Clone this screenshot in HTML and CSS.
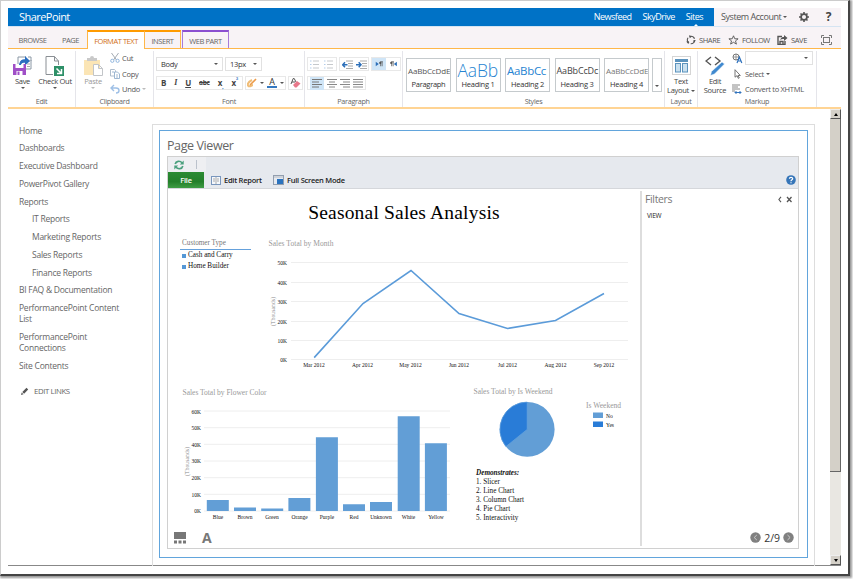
FILE: index.html
```html
<!DOCTYPE html>
<html lang="en">
<head>
<meta charset="utf-8">
<title>SharePoint - Page Viewer</title>
<link rel="stylesheet" href="styles.css">
</head>
<body>
<div class="window">
<header class="suite">
  <div class="suite-blue"><span class="brand">SharePoint</span><nav class="suite-links"><a>Newsfeed</a><a>SkyDrive</a><a class="current">Sites</a></nav></div>
  <div class="suite-user"><span class="account">System Account</span><i class="caret"></i>
    <svg class="gear" width="10" height="10" viewBox="0 0 10 10"><circle cx="5" cy="5" r="2.9" fill="none" stroke="#555" stroke-width="1.7"/><path d="M5 0v2M5 8v2M0 5h2M8 5h2M1.5 1.5l1.3 1.3M7.2 7.2l1.3 1.3M8.5 1.5L7.2 2.8M2.8 7.2L1.5 8.5" stroke="#555" stroke-width="1.6"/></svg>
    <b class="help">?</b></div>
</header>
<div class="tabs">
  <span class="tab browse">BROWSE</span><span class="tab page">PAGE</span><span class="tab format">FORMAT TEXT</span><span class="tab insert">INSERT</span><span class="tab webpart">WEB PART</span>
  <div class="actions">
    <svg width="10" height="10" viewBox="0 0 10 10"><circle cx="5" cy="5" r="3.7" fill="none" stroke="#555" stroke-width="1.1" stroke-dasharray="6 1.7"/><path d="M3.2 0l2.6 1.4-2 1.8zM9.8 5.2L7.9 8 7 5.4zM.2 6.6l2.9-.3-.8 2.6z" fill="#555"/></svg><span class="a-share">SHARE</span>
    <svg width="11" height="10" viewBox="0 0 11 10"><path d="M5.5.8l1.3 3h3.3L7.5 5.9l.9 3.2-2.9-1.8-2.9 1.8.9-3.2L.9 3.8h3.3z" fill="none" stroke="#555" stroke-width=".9"/></svg><span class="a-follow">FOLLOW</span>
    <svg width="11" height="10" viewBox="0 0 11 10"><path d="M5 1.5H1v8h7V6M3 9V6.5h3V9" fill="none" stroke="#555" stroke-width="1.4"/><path d="M3 5C4 2.5 5.500 2 7 2V0l3.500 3L7 6V4C5.500 4 4 4 3 5z" fill="#555"/></svg><span class="a-save">SAVE</span>
    <svg width="11" height="10" viewBox="0 0 11 10"><path d="M.5 3V.5H3M8 .5h2.500V3M10.500 7v2.500H8M3 9.500H.5V7" fill="none" stroke="#777"/><rect x="2.500" y="2.500" width="6" height="5" fill="none" stroke="#777"/></svg>
  </div>
</div>
<section class="ribbon">
  <div class="group g-edit"><div class="tools">
    <div class="big save"><svg width="19" height="20" viewBox="0 0 19 20"><path d="M5 1h8M5 1v8M18 4v9h-5M15 1h3v4" fill="none" stroke="#8b98a5"/><path d="M13 5h4M14 8h3M14 10.500h3" stroke="#aaa"/><path d="M7 8C7 4 9 3.500 12 3.500V0l5 5-5 4.500V6.500C10 6.500 9 7 8 8z" fill="#2c6fc0"/><path d="M0 8h13v11H0z" fill="#a04fc7"/><path d="M2.500 8h8v4h-8z" fill="#fff"/><path d="M3.500 19v-4h6v4" fill="#fff"/><path d="M4.500 19v-3.500h2V19" fill="#a04fc7"/><path d="M6 9C6.500 5 9 3.500 12 3.500V6.500C10 6.500 8 7 8 9z" fill="#2c6fc0"/></svg><span>Save</span><i class="caret"></i></div>
    <div class="big checkout"><svg width="20" height="20" viewBox="0 0 20 20"><path d="M1 .5h8.500l4 4.500v4M8 18.500H1V.5M9.500.5V5h4" fill="none" stroke="#8a8f94"/><rect x="9" y="10" width="10" height="10" fill="#2e9068"/><path d="M11.500 12.500l4.500 4.500M16.500 13v4.500H12" fill="none" stroke="#fff" stroke-width="1.500"/></svg><span>Check Out</span><i class="caret"></i></div>
  </div><div class="label">Edit</div></div>
  <div class="group g-clip"><div class="tools">
    <div class="big paste"><svg width="19" height="21" viewBox="0 0 19 21"><path d="M0 4h16v15H0z" fill="#fbe5b5"/><path d="M3 5V2h3a2 2 0 0 1 4 0h3v3z" fill="#c9c9c9"/><path d="M9.500 8.500h5l4 4v7h-9zM14.500 8.500v4h4" fill="#fff" stroke="#c2c5c8"/></svg><span>Paste</span><i class="caret light"></i></div>
    <div class="stack">
      <div><svg width="10" height="10" viewBox="0 0 10 10"><path d="M1.500 0l5 7M8.500 0l-5 7" stroke="#a5acb4" fill="none"/><circle cx="2.300" cy="7.800" r="1.600" fill="none" stroke="#94b8df"/><circle cx="7.600" cy="7.800" r="1.600" fill="none" stroke="#94b8df"/></svg><span>Cut</span></div>
      <div><svg width="10" height="10" viewBox="0 0 10 10"><path d="M.5.5h4l1 1V7h-5z" fill="#fff" stroke="#aebdcd"/><path d="M4.500 3h3L9.500 5v4.500h-5z" fill="#fff" stroke="#9db7d2"/><path d="M6 6h2M6 8h2M2 3h2" stroke="#9db7d2"/></svg><span>Copy</span></div>
      <div><svg width="10" height="10" viewBox="0 0 10 10"><path d="M4 1L1 4l3 3M1 4h5c4 0 4 5 0 5" fill="none" stroke="#9fc0e6" stroke-width="1.400"/></svg><span>Undo</span><i class="caret light"></i></div>
    </div>
  </div><div class="label">Clipboard</div></div>
  <div class="group g-font"><div class="tools rows">
    <div class="row"><div class="select s-body">Body<i class="caret"></i></div><div class="select s-size">13px<i class="caret"></i></div></div>
    <div class="row"><div class="box bius"><b>B</b><b class="it">I</b><b class="un">U</b><b class="st">abc</b><b>x<sub>,</sub></b><b>x<sup>²</sup></b></div>
      <div class="box colors"><svg width="10" height="11" viewBox="0 0 10 11"><path d="M1 8C0 5 3 3 5 2M1 8c2 1 4-1 5-1" fill="none" stroke="#f0bd77" stroke-width="2"/><path d="M3 7L9 1" stroke="#ec9a49" stroke-width="1.600"/></svg><i class="caret"></i><span class="fontcolor">A</span><i class="caret"></i></div>
      <div class="box clear"><svg width="11" height="10" viewBox="0 0 11 10"><path d="M1 6l2.200-5.500h1L6 4M2 4h3" fill="none" stroke="#555"/><path d="M3 7l4-4 3.500 2.500L6.500 9.500H5z" fill="#e8788a"/></svg></div></div>
  </div><div class="label">Font</div></div>
  <div class="group g-para"><div class="tools rows">
    <div class="row"><div class="box pair"><svg width="10" height="9"><path d="M3 1h6M3 4.500h6M3 8h6" stroke="#c6c9cc"/><path d="M0 1h1.500M0 4.500h1.500M0 8h1.500" stroke="#b3cdea"/></svg><svg width="10" height="9"><path d="M3 1h6M3 4.500h6M3 8h6" stroke="#c6c9cc"/><path d="M0 1h1.500M0 4.500h1.500M0 8h1.500" stroke="#b3cdea"/></svg></div>
      <div class="box pair"><svg width="11" height="9"><path d="M4 1h7M6 3.500h5M6 6h5M4 8.500h7" stroke="#aaa"/><path d="M5.500 4.800H1M3 2.300L.7 4.800 3 7.300" fill="none" stroke="#2c6fb9" stroke-width="1.500"/></svg><svg width="11" height="9"><path d="M4 1h7M6 3.500h5M6 6h5M4 8.500h7" stroke="#aaa"/><path d="M0 4.800h4.500M2.700 2.300L5 4.800 2.700 7.300" fill="none" stroke="#2c6fb9" stroke-width="1.500"/></svg></div>
      <div class="box pair half"><svg width="9" height="6" viewBox="0 0 10 8"><path d="M0 1v6l4-3z" fill="#2c6fb9"/><path d="M6.500 1v6M8.500 1v6M9.500 1H6" stroke="#555"/><circle cx="6" cy="2.500" r="1.500" fill="#555"/></svg><svg width="9" height="6" viewBox="0 0 10 8"><path d="M9.500 1v6l-4-3z" fill="#2c6fb9"/><path d="M2.500 1v6M4.500 1v6M5.500 1H2" stroke="#555"/><circle cx="2" cy="2.500" r="1.500" fill="#555"/></svg></div></div>
    <div class="row"><div class="box aligns"><span><svg width="10" height="9"><path d="M0 .5h10M0 3h7M0 5.500h10M0 8h7" stroke="#777"/></svg></span><svg width="10" height="9"><path d="M0 .5h10M2 3h6M0 5.500h10M2 8h6" stroke="#888"/></svg><svg width="10" height="9"><path d="M0 .5h10M3 3h7M0 5.500h10M3 8h7" stroke="#888"/></svg><svg width="10" height="9"><path d="M0 .5h10M0 3h10M0 5.500h10M0 8h10" stroke="#888"/></svg></div></div>
  </div><div class="label">Paragraph</div></div>
  <div class="group g-styles"><div class="tools">
    <div class="tile"><em>AaBbCcDdE</em><span>Paragraph</span></div>
    <div class="tile h1"><em>AaBb</em><span>Heading 1</span></div>
    <div class="tile h2"><em>AaBbCc</em><span>Heading 2</span></div>
    <div class="tile h3"><em>AaBbCcDc</em><span>Heading 3</span></div>
    <div class="tile h4"><em>AaBbCcDdE</em><span>Heading 4</span></div>
    <div class="more"><i class="caret"></i></div>
  </div><div class="label">Styles</div></div>
  <div class="group g-layout"><div class="tools">
    <div class="big layout"><svg width="19" height="19" viewBox="0 0 19 19"><rect x=".5" y=".5" width="18" height="18" fill="#fff" stroke="#aaa" stroke-dasharray="1 1"/><rect x="3" y="3" width="13" height="3" fill="#5b93bd"/><rect x="3.500" y="7.500" width="5" height="8.500" fill="#c9e0ef" stroke="#5b93bd"/><rect x="10.500" y="7.500" width="5" height="8.500" fill="#c9e0ef" stroke="#5b93bd"/></svg><span>Text</span><span>Layout<i class="caret"></i></span></div>
  </div><div class="label">Layout</div></div>
  <div class="group g-markup"><div class="tools">
    <div class="big source"><svg width="20" height="21" viewBox="0 0 20 21"><path d="M6 1L1 5l5 4M10 1l5 4-5 4" fill="none" stroke="#555" stroke-width="1.400"/><path d="M17 6l2.500 2L9.500 18l-4 1.500 1-4z" fill="#4089cf" stroke="#fff" stroke-width=".5"/></svg><span>Edit</span><span>Source</span></div>
    <div class="stack">
      <div><svg width="11" height="11" viewBox="0 0 11 11"><circle cx="4" cy="4" r="3" fill="none" stroke="#777"/><path d="M1 4h6M4 1v6" stroke="#777" stroke-width=".7"/><path d="M5 10l2.400-6 2.400 6M6 8h3" fill="none" stroke="#3173bd" stroke-width="1.200"/></svg><div class="lang"><i class="caret"></i></div></div>
      <div><svg width="11" height="10" viewBox="0 0 11 10"><path d="M3 .7v7.500l2-1.500 1.300 2.700 1-.5L6 6.500h2.300z" fill="#fff" stroke="#666" stroke-width=".9"/></svg><span class="sel">Select</span><i class="caret"></i></div>
      <div><svg width="11" height="10" viewBox="0 0 11 10"><path d="M0 1h8M0 3h6M0 5h8M0 7h3" stroke="#888"/><path d="M3 8.500h6M7.500 7l1.500 1.500L7.500 10M4.500 7L3 8.500 4.500 10" fill="none" stroke="#3173bd"/></svg><span class="xhtml">Convert to XHTML</span></div>
    </div>
  </div><div class="label">Markup</div></div>
</section>
<main class="main">
  <nav class="side"><a>Home</a><a>Dashboards</a><a>Executive Dashboard</a><a>PowerPivot Gallery</a><a>Reports</a><a class="sub">IT Reports</a><a class="sub">Marketing Reports</a><a class="sub">Sales Reports</a><a class="sub">Finance Reports</a><a>BI FAQ &amp; Documentation</a><a>PerformancePoint Content<br>List</a><a>PerformancePoint<br>Connections</a><a>Site Contents</a>
    <a class="edit"><svg width="8" height="8" viewBox="0 0 8 8"><path d="M0 8l.7-2.500L2.500 7.300zM1.300 4.900L5.500.8 7.200 2.500 3.100 6.700z" fill="#555"/></svg>EDIT LINKS</a></nav>
  <div class="zone"><div class="part"><h2>Page Viewer</h2>
    <div class="viewer">
      <div class="vtop"><div class="quick"><svg width="10" height="10" viewBox="0 0 10 10"><path d="M1.200 4C2 .8 6 .5 8 2.700M8.800 6C8 9.200 4 9.500 2 7.300" fill="none" stroke="#4aa07d" stroke-width="1.700"/><path d="M9.700.5v4H5.800zM.3 9.500v-4h3.900z" fill="#4aa07d"/></svg><i></i></div>
        <div class="vbar"><span class="file">File</span>
          <svg width="10" height="9" viewBox="0 0 10 9"><rect x=".5" y=".5" width="9" height="8" fill="#f5f8fc" stroke="#7996bd"/><path d="M5 1v7M2 3h2M2 5h2M6 3h2M6 5h2" stroke="#aaa"/></svg><b class="er">Edit Report</b>
          <svg width="11" height="10" viewBox="0 0 11 10"><rect x=".5" y=".5" width="10" height="9" fill="#e7eaf0" stroke="#929eae"/><path d="M1 2h9" stroke="#b5bbc3"/><rect x="4" y="4" width="6" height="5" fill="#2b73be"/></svg><b class="fs">Full Screen Mode</b>
          <svg class="q" width="10" height="10" viewBox="0 0 10 10"><circle cx="5" cy="5" r="4.800" fill="#3575b8"/><path d="M3.400 3.800C3.400 1.800 6.700 1.800 6.700 3.800 6.700 4.900 5 4.800 5 6.200M5 7.200v1" fill="none" stroke="#fff" stroke-width="1.200"/></svg></div></div>
      <div class="vbody">
        <div class="canvas"><h1><span>Seasonal Sales Analysis</span></h1>
          <div class="r1"><div class="slicer"><h3>Customer Type</h3><p>Cash and Carry</p><p>Home Builder</p></div>
            <svg class="chart" width="365" height="136" viewBox="265 236 365 136">
              <text class="ct" x="268.500" y="246" textLength="65">Sales Total by Month</text>
              <path class="grid" d="M291 262.500h337M291 282.500h337M291 301.500h337M291 321.500h337M291 340.500h337M291 359.500h337"/>
              <g class="ax end"><text x="287" y="265">50K</text><text x="287" y="284.500">40K</text><text x="287" y="304">30K</text><text x="287" y="323.500">20K</text><text x="287" y="343">10K</text><text x="287" y="362">0K</text></g>
              <text class="thou" transform="translate(275 326) rotate(-90)" textLength="29">(Thousands)</text>
              <path d="M314.200 357.600L363 303.500 411 270.500 459 313.500 507.500 328.500 555.500 320.500 604 293.500" fill="none" stroke="#5b9bd9" stroke-width="1.600"/>
              <g class="ax mid"><text x="314" y="366.700">Mar 2012</text><text x="362.500" y="366.700">Apr 2012</text><text x="410.500" y="366.700">May 2012</text><text x="459" y="366.700">Jun 2012</text><text x="507.500" y="366.700">Jul 2012</text><text x="555.500" y="366.700">Aug 2012</text><text x="604" y="366.700">Sep 2012</text></g>
            </svg></div>
          <div class="r2">
            <svg class="chart" width="275" height="140" viewBox="181 385 275 140">
              <text class="ct" x="182.500" y="394.700" textLength="84">Sales Total by Flower Color</text>
              <path class="grid" d="M204 411h246M204 427.700h246M204 444.300h246M204 461h246M204 477.700h246M204 494.300h246M204 511h246"/>
              <g class="ax end"><text x="201" y="413.500">60K</text><text x="201" y="430">50K</text><text x="201" y="446.600">40K</text><text x="201" y="463.300">30K</text><text x="201" y="480">20K</text><text x="201" y="496.600">10K</text><text x="201" y="513.300">0K</text></g>
              <text class="thou" transform="translate(189 476) rotate(-90)" textLength="29">(Thousands)</text>
              <path d="M206.800 500h22v11h-22zM234 507.500h22v3.500h-22zM261.200 508.500h22v2.500h-22zM288.400 498h22v13h-22zM315.900 437.300h22V511h-22zM343 504.200h22v6.800h-22zM370 502h22v9h-22zM397.700 416.200h22V511h-22zM424.900 443.300h22V511h-22z" fill="#629ed6"/>
              <g class="ax mid"><text x="218" y="518.500">Blue</text><text x="245" y="518.500">Brown</text><text x="272" y="518.500">Green</text><text x="299.500" y="518.500">Orange</text><text x="327" y="518.500">Purple</text><text x="354" y="518.500">Red</text><text x="381" y="518.500">Unknown</text><text x="408.500" y="518.500">White</text><text x="436" y="518.500">Yellow</text></g>
            </svg>
            <div class="weekend">
              <svg class="chart" width="165" height="80" viewBox="470 385 165 80">
                <text class="ct" x="473.500" y="394" textLength="79">Sales Total by Is Weekend</text>
                <circle cx="527.200" cy="429.400" r="27.400" fill="#629ed6"/><path d="M527.200 429.400V402a27.400 27.400 0 0 0-21.300 44.600z" fill="#297cd7" stroke="#69a5de" stroke-width=".7"/>
                <text class="ct" x="586" y="408.300" textLength="35">Is Weekend</text>
                <rect x="593" y="412.500" width="10" height="5.500" fill="#629ed6"/><rect x="593" y="421.500" width="10" height="5.500" fill="#297cd7"/>
                <text class="ax" x="606" y="417.700">No</text><text class="ax" x="606" y="426.500">Yes</text>
              </svg>
              <div class="demo"><b>Demonstrates:</b><span>1. Slicer</span><span>2. Line Chart</span><span>3. Column Chart</span><span>4. Pie Chart</span><span>5. Interactivity</span></div>
            </div></div>
          <div class="foot"><svg width="12" height="12" viewBox="0 0 12 12"><path d="M0 0h12v7H0zM0 8.500h3V11.500H0zM4.500 8.500h3v3h-3zM9 8.500h3v3H9z" fill="#777"/></svg><b>A</b></div>
        </div>
        <aside class="filters"><div class="fhead"><span>Filters</span><svg width="14" height="7" viewBox="0 0 14 7"><path d="M3 .8L.9 3.500 3 6.200" fill="none" stroke="#555" stroke-width="1.100"/><path d="M9 1l4.500 5M13.500 1L9 6" stroke="#555" stroke-width="1.300"/></svg></div><div class="view">VIEW</div>
          <div class="pager"><svg width="11" height="11"><circle cx="5.500" cy="5.500" r="5.200" fill="#808080"/><path d="M6.800 3L4.200 5.500 6.800 8" fill="none" stroke="#ccc"/></svg><span>2/9</span><svg width="11" height="11"><circle cx="5.500" cy="5.500" r="5.200" fill="#808080"/><path d="M4.500 3l2.600 2.500L4.500 8" fill="none" stroke="#ccc"/></svg></div></aside>
      </div>
    </div></div></div>
  <div class="scroll"><div class="btn up"><i></i></div><div class="thumb"></div><div class="btn down"><i></i></div></div>
</main>
</div>
</body>
</html>
```
FILE: styles.css
```css
* { box-sizing: border-box; }
body { margin: 0; width: 853px; height: 579px; overflow: hidden; background: #fff; font-family: "Open Sans", "Noto Sans", sans-serif; color: #555; font-size: 7.5px; letter-spacing: -.28px; line-height: 10px; white-space: nowrap; }
svg { display: block; flex: none; }
h1, h2, h3, p { margin: 0; font-weight: 400; }
.window { width: 850px; height: 576px; padding: 7px 7px 8px; background: #fff; border: 1px solid #ccc; border-right: 2px solid #444; border-bottom: 2px solid #444; box-shadow: 1px 1px 2px 1px #999; }
.suite, .tabs, .ribbon, .main { width: 833px; display: flex; }
.caret { display: inline-block; flex: none; width: 0; height: 0; border: 2px solid transparent; border-top-color: #555; border-bottom: 0; }
.caret.light { border-top-color: #bbb; }

.suite { height: 18px; background: #f8f3f6; }
.suite-blue { width: 706px; background: #0072c6; color: #fff; display: flex; justify-content: space-between; align-items: center; padding: 0 11px; }
.brand { font-size: 11px; letter-spacing: -.55px; }
.suite-links { display: flex; gap: 11px; font-size: 9px; letter-spacing: -.5px; line-height: 18px; }
.current { position: relative; }
.current::after { content: ""; position: absolute; bottom: 0; left: 8px; border: 2px solid transparent; border-bottom-color: #fff; border-top: 0; }
.suite-user { flex: 1; display: flex; align-items: center; padding: 0 10px 0 7px; font-size: 9px; letter-spacing: -.45px; }
.suite-user .caret { margin-left: 2px; }
.gear { margin-left: 12px; }
.help { margin-left: auto; font-size: 12px; color: #444; }

.tabs { height: 23px; padding-top: 4px; background: #f8f3f6; border-top: 1px solid #d5e4f2; border-bottom: 1px solid #ffb74a; }
.tab { height: 18px; line-height: 19px; text-align: center; font-size: 7.5px; letter-spacing: -.45px; color: #666; }
.browse { width: 49px; }
.page { width: 27px; margin-right: 3px; }
.format { width: 58px; height: 19px; line-height: 18px; margin-top: -1px; background: #fff; color: #d27019; border: 1px solid #ffb74a; border-top: 2px solid #ff9b00; border-bottom: 0; }
.insert { width: 36px; height: 18px; line-height: 18px; margin-top: -1px; border-top: 2px solid #ff9b00; border-right: 1px solid #ffb74a; }
.webpart { width: 47px; height: 18px; line-height: 18px; margin: -1px 0 0 1px; border: 1px solid #a77bd9; border-top: 2px solid #8b4fd0; border-bottom: 0; }
.actions { margin-left: auto; display: flex; align-items: center; padding-right: 9px; height: 17px; font-size: 7.5px; letter-spacing: -.4px; }
.a-share { width: 29px; margin-left: 3px; }
.a-follow { width: 35px; margin-left: 3px; }
.a-save { width: 30px; margin-left: 3px; }

.ribbon { height: 60px; border-bottom: 2px solid #ffd494; background: #fff; }
.group { border-right: 1px solid #e5e5ea; display: flex; flex-direction: column; height: 56px; margin-top: 2px; }
.tools { height: 46px; display: flex; padding-top: 5px; }
.label { text-align: center; font-size: 7.2px; color: #666; line-height: 11px; }
.big { display: flex; flex-direction: column; align-items: center; }
.big span { line-height: 9px; color: #444; }
.big > .caret { margin-top: 1px; }
.g-edit { width: 68px; }
.save { width: 29px; }
.save svg, .checkout svg { margin-bottom: 1px; }
.checkout { width: 36px; }
.g-clip { width: 78px; }
.paste { width: 34px; }
.paste, .paste span { color: #999; }
.stack { display: flex; flex-direction: column; gap: 5.500px; margin-top: -3px; }
.stack > div { display: flex; align-items: center; gap: 2px; height: 10px; color: #555; }
.rows { flex-direction: column; gap: 5px; padding-top: 6px; }
.row { display: flex; height: 14px; }
.g-font { width: 151px; }
.g-font .row, .g-para .row { padding-left: 2px; gap: 2px; }
.select, .lang { border: 1px solid #e1e1e1; display: flex; align-items: center; justify-content: space-between; padding: 0 4px; color: #333; }
.s-body { width: 67px; }
.s-size { width: 37px; }
.box { border: 1px solid #e8e8e8; display: flex; align-items: center; justify-content: space-around; }
.bius { width: 87px; font-size: 8px; color: #444; }
.it { font-family: "Liberation Serif", serif; font-style: italic; }
.un { text-decoration: underline; }
.st { text-decoration: line-through; font-size: 6.5px; }
.bius sub, .bius sup { color: #3478c0; font-size: 6px; line-height: 0; }
.colors { width: 41px; }
.fontcolor { font-size: 9px; line-height: 8px; border-bottom: 2px solid #3478c0; width: 10px; text-align: center; color: #333; }
.clear { width: 15px; }
.g-para { width: 98px; }
.pair { width: 30px; }
.half { background: linear-gradient(90deg, #cfe5f7 14px, #fff 14px); }
.aligns { width: 59px; }
.aligns span { background: #cfe5f7; padding: 2px; }
.g-styles { width: 262px; }
.g-styles .tools { padding: 7px 0 0 3px; gap: 4.500px; }
.tile { width: 45px; height: 34px; border: 1px solid #c5cacd; overflow: hidden; display: flex; flex-direction: column; align-items: center; flex: none; }
.tile em { font-style: normal; height: 21px; line-height: 24px; font-size: 8px; letter-spacing: -.15px; align-self: flex-start; margin-left: 1px; }
.tile span { color: #333; font-size: 7.5px; line-height: 9px; }
.tile.h1 em { font-weight: 300; font-size: 17.5px; line-height: 22px; color: #2683d1; letter-spacing: -.2px; }
.h2 em { font-size: 11.5px; color: #2683d1; letter-spacing: -.3px; }
.h3 em { font-size: 9px; color: #444; }
.h4 em { color: #777; }
.more { width: 10px; height: 34px; border: 1px solid #c5cacd; display: flex; align-items: flex-end; justify-content: center; padding-bottom: 4px; margin-left: -2px; }
.g-layout { width: 33px; }
.layout { width: 32px; }
.layout svg { margin-bottom: 2px; }
.layout .caret { margin-left: 2px; vertical-align: 1px; }
.g-markup { width: 119px; }
.source { width: 34px; }
.g-markup .stack { color: #444; }
.stack > div > .lang { width: 68px; height: 14px; justify-content: flex-end; }

.main { height: 457px; border-bottom: 1px solid #888; }
.side { width: 144px; padding: 15.500px 0 0 11px; display: flex; flex-direction: column; gap: 6.500px; font-size: 8.500px; letter-spacing: -.25px; line-height: 11.250px; color: #666; }
.sub { padding-left: 13px; }
.edit { display: flex; align-items: center; gap: 5px; padding-left: 2px; margin-top: 8px; font-size: 7.800px; letter-spacing: -.4px; }
.zone { width: 663px; height: 442px; margin-top: 15px; border: 1px solid #ddd; border-bottom: 0; padding: 5px 6px; }
.part { width: 649px; height: 428px; border: 1px solid #62a5dc; padding: 6px 8px 0 7px; }
h2 { font-size: 12.500px; letter-spacing: -.4px; line-height: 17px; height: 19px; color: #666; }
.viewer { width: 632px; height: 393px; border: 1px solid #d0d0d0; }
.vtop { height: 32px; background: #e6e9ee; border-bottom: 1px solid #d5d7db; }
.quick { width: 38px; height: 15px; background: #eeeff2; display: flex; align-items: center; padding-left: 6px; gap: 12px; }
.quick i { width: 1px; height: 9px; background: #bbc2cc; }
.vbar { height: 16px; display: flex; align-items: center; font-size: 7.500px; letter-spacing: -.25px; color: #222; }
.vbar b { font-weight: 600; }
.file { width: 36px; height: 16px; background: linear-gradient(#2b8b33, #237f2a 60%, #3e9c44); color: #fff; text-align: center; line-height: 16px; font-weight: 600; margin-right: 7px; }
.er { width: 45px; margin: 0 4px 0 3px; }
.fs { margin-left: 3px; }
.q { margin-left: auto; margin-right: 2px; }
.vbody { display: flex; height: 359px; }
.canvas { width: 472px; font-family: "Liberation Serif", serif; letter-spacing: 0; color: #111; }
h1 { height: 47px; text-align: center; font-size: 19.500px; letter-spacing: .18px; line-height: 47px; color: #000; }
.r1 { height: 136px; display: flex; padding-left: 12px; }
.slicer { width: 85px; padding-top: 2px; font-size: 7.200px; line-height: 11px; letter-spacing: 0; }
.slicer h3 { width: 71px; font-size: 7.200px; color: #777; border-bottom: 1px solid #65a1dc; padding-left: 2px; height: 12px; line-height: 11px; }
.slicer p { padding-left: 2px; display: flex; align-items: center; gap: 2px; }
.slicer p::before { content: ""; width: 4px; height: 4px; background: #5598d6; }
.chart { font-family: "Liberation Serif", serif; letter-spacing: 0; }
.ct { font-size: 7.500px; fill: #999; }
.grid { stroke: #eee; fill: none; }
.ax { font-size: 5.500px; fill: #111; }
.end { text-anchor: end; }
.mid { text-anchor: middle; }
.thou { font-size: 5.500px; fill: #888; }
.r2 { display: flex; padding: 13px 0 0 13px; gap: 14px; }
.demo { display: flex; flex-direction: column; font-size: 7.200px; line-height: 8.900px; padding: 4px 0 0 6px; }
.demo b { font-style: italic; }
.foot { display: flex; gap: 16px; padding: 7px 0 0 6px; height: 20px; font-family: "Open Sans", sans-serif; }
.foot b { font-size: 14px; line-height: 12px; color: #777; font-weight: 700; }
.filters { flex: 1; border-left: 2px solid #ddd; height: 355px; margin-top: 2px; display: flex; flex-direction: column; }
.fhead { display: flex; align-items: center; padding: 1px 6px 0 3px; font-size: 10.500px; letter-spacing: -.35px; color: #777; justify-content: space-between; height: 15px; }
.view { font-size: 6.500px; padding: 5px 5px; color: #222; }
.pager { margin-top: auto; display: flex; align-items: center; gap: 3px; justify-content: flex-end; padding: 0 4px 3px; font-size: 10.500px; letter-spacing: 0; color: #333; }
.scroll { width: 11px; margin-left: 15px; background: #e9e7e2; display: flex; flex-direction: column; }
.btn { height: 10px; background: #d4d0c8; border: 1px solid #eee; border-right-color: #555; border-bottom-color: #555; display: flex; align-items: center; justify-content: center; }
.up i { border: 2px solid transparent; border-bottom: 3px solid #000; border-top: 0; }
.down i { border: 2px solid transparent; border-top: 3px solid #000; border-bottom: 0; }
.thumb { height: 353px; background: #d4d0c8; border-right: 1px solid #666; border-bottom: 1px solid #666; }
.down { margin-top: auto; }
```
